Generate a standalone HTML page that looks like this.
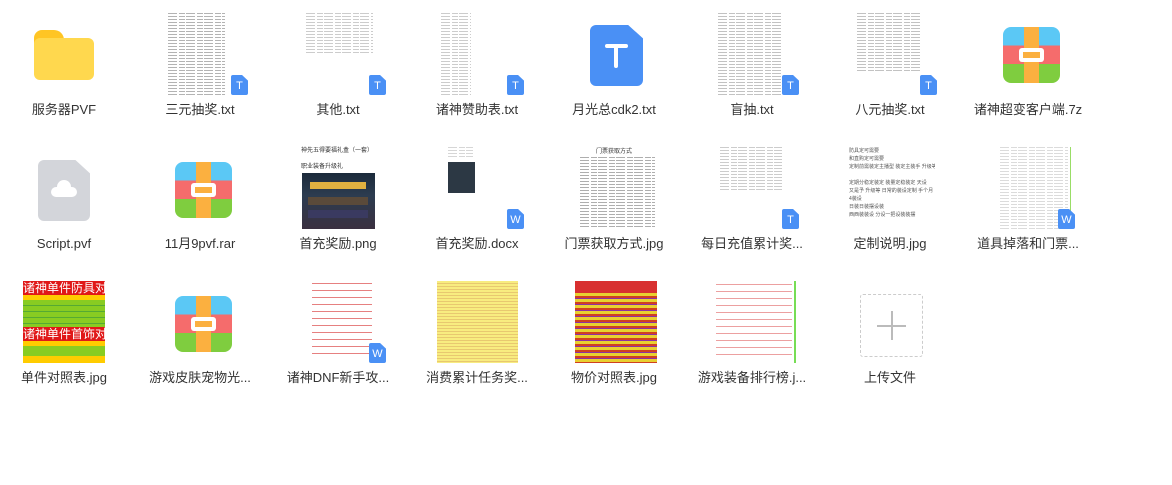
<!DOCTYPE html>
<html><head><meta charset="utf-8"><style>
body{margin:0;width:1172px;height:485px;background:#fff;position:relative;overflow:hidden;font-family:"Liberation Sans","Noto Sans CJK SC",sans-serif}
.a{position:absolute}
.lbl{position:absolute;width:136px;text-align:center;font-size:13px;line-height:16px;color:#333;white-space:nowrap}
.txt{position:absolute;background:repeating-linear-gradient(180deg,#9a9a9a 0 1px,#fff 1px 3px);opacity:.75}
.txt::after{content:"";position:absolute;inset:0;background:repeating-linear-gradient(90deg,transparent 0 9px,#fff 9px 11px,transparent 11px 17px,#fff 17px 18px)}
.badge{position:absolute;width:17px;height:20px;background:#4a90f5;border-radius:2px;clip-path:polygon(0 0,65% 0,100% 28%,100% 100%,0 100%);color:#fff;font-size:11px;line-height:22px;text-align:center}
.arc{position:absolute;width:57px;height:56px;border-radius:8px;overflow:hidden;background:linear-gradient(180deg,#5bc8f5 0 33%,#f56c6c 33% 66%,#7fcd3f 66%)}
.arc i{position:absolute;left:21px;top:0;width:15px;height:100%;background:#fbb040}
.arc b{position:absolute;left:16px;top:21px;width:25px;height:14px;background:#fff;border-radius:3px}
.arc b::after{content:"";position:absolute;left:4px;top:4px;width:17px;height:6px;background:#fbb040}
.red{position:absolute;background:repeating-linear-gradient(180deg,#e06060 0 1px,#fff 1px 7px)}
</style></head><body>
<!-- Row 1 -->
<div class="a" style="left:34px;top:30px;width:30px;height:16px;background:#ffc524;border-radius:8px 10px 0 0"></div>
<div class="a" style="left:34px;top:38px;width:60px;height:42px;background:#ffd84e;border-radius:6px"></div>
<div class="lbl" style="left:-4px;top:102px">服务器PVF</div>

<div class="txt" style="left:168px;top:13px;width:57px;height:82px"></div>
<div class="badge" style="left:231px;top:75px">T</div>
<div class="lbl" style="left:132px;top:102px">三元抽奖.txt</div>

<div class="txt" style="left:306px;top:13px;width:67px;height:40px;opacity:.5"></div>
<div class="badge" style="left:369px;top:75px">T</div>
<div class="lbl" style="left:270px;top:102px">其他.txt</div>

<div class="txt" style="left:441px;top:13px;width:30px;height:82px;opacity:.5"></div>
<div class="badge" style="left:507px;top:75px">T</div>
<div class="lbl" style="left:409px;top:102px">诸神赞助表.txt</div>

<div class="a" style="left:590px;top:25px;width:53px;height:61px;background:#4a90f5;border-radius:6px;clip-path:polygon(0 0,72% 0,100% 22%,100% 100%,0 100%)"></div>
<div class="a" style="left:605px;top:44px;width:23px;height:4px;background:#fff;border-radius:2px"></div>
<div class="a" style="left:614px;top:44px;width:4px;height:24px;background:#fff;border-radius:2px"></div>
<div class="lbl" style="left:546px;top:102px">月光总cdk2.txt</div>

<div class="txt" style="left:718px;top:13px;width:64px;height:82px;opacity:.6"></div>
<div class="badge" style="left:782px;top:75px">T</div>
<div class="lbl" style="left:684px;top:102px">盲抽.txt</div>

<div class="txt" style="left:857px;top:13px;width:63px;height:60px;opacity:.6"></div>
<div class="badge" style="left:920px;top:75px">T</div>
<div class="lbl" style="left:822px;top:102px">八元抽奖.txt</div>

<div class="arc" style="left:1003px;top:27px"><i></i><b></b></div>
<div class="lbl" style="left:960px;top:102px">诸神超变客户端.7z</div>

<!-- Row 2 -->
<div class="a" style="left:38px;top:160px;width:52px;height:61px;background:#d3d5da;border-radius:6px;clip-path:polygon(0 0,72% 0,100% 22%,100% 100%,0 100%)"></div>
<div class="a" style="left:51px;top:187px;width:26px;height:10px;background:#fff;border-radius:5px"></div>
<div class="a" style="left:57px;top:180px;width:14px;height:14px;background:#fff;border-radius:50%"></div>
<div class="lbl" style="left:-4px;top:236px">Script.pvf</div>

<div class="arc" style="left:175px;top:162px"><i></i><b></b></div>
<div class="lbl" style="left:132px;top:236px">11月9pvf.rar</div>

<div class="a" style="left:301px;top:147px;font-size:6px;color:#333;line-height:8px">神先五得要福礼盒（一套）<br><br>职业装备升级礼</div>
<div class="a" style="left:302px;top:173px;width:73px;height:56px;background:linear-gradient(180deg,#1c2a3a,#2c3c50 40%,#3a3040)"></div>
<div class="a" style="left:310px;top:182px;width:56px;height:7px;background:#e0b040"></div>
<div class="a" style="left:308px;top:197px;width:60px;height:8px;background:#5a4a3a"></div>
<div class="a" style="left:308px;top:210px;width:60px;height:8px;background:#3a3a60"></div>
<div class="lbl" style="left:270px;top:236px">首充奖励.png</div>

<div class="a" style="left:448px;top:162px;width:27px;height:31px;background:#2c3844"></div>
<div class="txt" style="left:448px;top:147px;width:25px;height:12px;opacity:.4"></div>
<div class="badge" style="left:507px;top:209px">W</div>
<div class="lbl" style="left:409px;top:236px">首充奖励.docx</div>

<div class="a" style="left:596px;top:146px;font-size:6px;color:#333">门票获取方式</div>
<div class="txt" style="left:580px;top:157px;width:75px;height:72px;opacity:.8"></div>
<div class="lbl" style="left:546px;top:236px">门票获取方式.jpg</div>

<div class="txt" style="left:720px;top:147px;width:62px;height:45px;opacity:.5"></div>
<div class="badge" style="left:782px;top:209px">T</div>
<div class="lbl" style="left:684px;top:236px">每日充值累计奖...</div>

<div class="a" style="left:849px;top:147px;width:86px;height:82px;overflow:hidden;font-size:5px;line-height:8px;color:#555;white-space:nowrap">防具定可需要<br>和直购定可需要<br>定制前需装定主播型 装定主装手 升级等 定制<br><br>定期分稳定装定 装量定稳装定 天设<br>又是予 升级等 日常的装设定制 手个月<br>4装设<br>日装日装摆设装<br>西西装装设 分设一把设装装摆</div>
<div class="lbl" style="left:822px;top:236px">定制说明.jpg</div>

<div class="txt" style="left:1000px;top:147px;width:68px;height:82px;opacity:.35"></div>
<div class="a" style="left:1070px;top:147px;width:1px;height:82px;background:#9d6"></div>
<div class="badge" style="left:1058px;top:209px">W</div>
<div class="lbl" style="left:960px;top:236px">道具掉落和门票...</div>

<!-- Row 3 -->
<div class="a" style="left:23px;top:281px;width:82px;height:82px;background:#8c2"></div>
<div class="a" style="left:23px;top:281px;width:82px;height:14px;background:#e01818;color:#fff;font-size:12px;line-height:14px;white-space:nowrap;overflow:hidden">诸神单件防具对照表</div>
<div class="a" style="left:23px;top:295px;width:82px;height:5px;background:#fc0"></div>
<div class="a" style="left:23px;top:300px;width:82px;height:25px;background:repeating-linear-gradient(180deg,#8c2 0 5px,#5a3 5px 6px)"></div>
<div class="a" style="left:23px;top:327px;width:82px;height:14px;background:#e01818;color:#fff;font-size:12px;line-height:14px;white-space:nowrap;overflow:hidden">诸神单件首饰对照表</div>
<div class="a" style="left:23px;top:341px;width:82px;height:5px;background:#fc0"></div>
<div class="a" style="left:23px;top:356px;width:82px;height:7px;background:#fc0"></div>
<div class="lbl" style="left:-4px;top:370px">单件对照表.jpg</div>

<div class="arc" style="left:175px;top:296px"><i></i><b></b></div>
<div class="lbl" style="left:132px;top:370px">游戏皮肤宠物光...</div>

<div class="red" style="left:312px;top:283px;width:60px;height:75px;opacity:.8"></div>
<div class="badge" style="left:369px;top:343px">W</div>
<div class="lbl" style="left:270px;top:370px">诸神DNF新手攻...</div>

<div class="a" style="left:437px;top:281px;width:81px;height:82px;background:repeating-linear-gradient(180deg,#f8ec80 0 2px,#e8c870 2px 3px)"></div>
<div class="lbl" style="left:409px;top:370px">消费累计任务奖...</div>

<div class="a" style="left:575px;top:281px;width:82px;height:82px;background:repeating-linear-gradient(180deg,#e8d030 0 3px,#d04020 3px 5px,#9030a0 5px 6px)"></div>
<div class="a" style="left:575px;top:281px;width:82px;height:12px;background:#d83030"></div>
<div class="lbl" style="left:546px;top:370px">物价对照表.jpg</div>

<div class="red" style="left:716px;top:284px;width:76px;height:76px;opacity:.6"></div>
<div class="a" style="left:794px;top:281px;width:2px;height:82px;background:#7d5"></div>
<div class="lbl" style="left:684px;top:370px">游戏装备排行榜.j...</div>

<div class="a" style="left:860px;top:294px;width:61px;height:61px;border:1px dashed #ccc;border-radius:3px"></div>
<div class="a" style="left:877px;top:325px;width:29px;height:2px;background:#bbb"></div>
<div class="a" style="left:891px;top:311px;width:2px;height:29px;background:#bbb"></div>
<div class="lbl" style="left:822px;top:370px">上传文件</div>
</body></html>
